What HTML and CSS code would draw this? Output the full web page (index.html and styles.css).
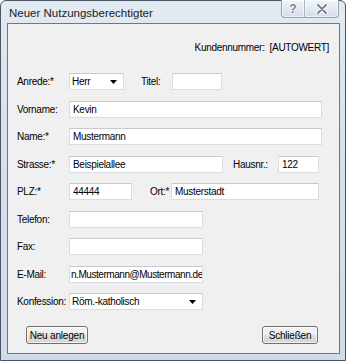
FILE: index.html
```html
<!DOCTYPE html>
<html lang="de">
<head>
    <meta charset="UTF-8">
    <meta name="viewport" content="width=device-width, initial-scale=1.0">
    <title>Neuer Nutzungsberechtigter</title>
    <link rel="stylesheet" href="styles.css">
</head>
<body>
    <div class="window">
        <div class="titlebar">
            <span class="title">Neuer Nutzungsberechtigter</span>
            <div class="caption-buttons">
                <div class="cap-btn cap-help">?</div>
                <div class="cap-btn cap-close">
                    <svg width="12" height="10" viewBox="0 0 12 10">
                        <path d="M2 1 L10 9 M10 1 L2 9" stroke="#fff" stroke-width="4" stroke-linecap="round"/>
                        <path d="M2 1 L10 9 M10 1 L2 9" stroke="#7a828d" stroke-width="2" stroke-linecap="round"/>
                    </svg>
                </div>
            </div>
        </div>

        <div class="client">
            <div class="kunde">Kundennummer:&nbsp;&nbsp;[AUTOWERT]</div>

            <div class="form">
                <div class="row">
                    <label class="lbl">Anrede:*</label>
                    <div class="combo w-anrede">
                        <span>Herr</span>
                        <svg class="arrow" width="7" height="4" viewBox="0 0 7 4"><path d="M0 0 H7 L3.5 4 Z" fill="#000"/></svg>
                    </div>
                    <label class="lbl-inline lbl-titel">Titel:</label>
                    <input class="field w-titel" type="text" value="">
                </div>

                <div class="row">
                    <label class="lbl">Vorname:</label>
                    <input class="field w-full" type="text" value="Kevin">
                </div>

                <div class="row">
                    <label class="lbl">Name:*</label>
                    <input class="field w-full" type="text" value="Mustermann">
                </div>

                <div class="row">
                    <label class="lbl">Strasse:*</label>
                    <input class="field w-strasse" type="text" value="Beispielallee">
                    <label class="lbl-inline lbl-hausnr">Hausnr.:</label>
                    <input class="field w-hausnr" type="text" value="122">
                </div>

                <div class="row">
                    <label class="lbl">PLZ:*</label>
                    <input class="field w-plz" type="text" value="44444">
                    <label class="lbl-inline lbl-ort">Ort:*</label>
                    <input class="field w-ort" type="text" value="Musterstadt">
                </div>

                <div class="row">
                    <label class="lbl">Telefon:</label>
                    <input class="field w-half" type="text" value="">
                </div>

                <div class="row">
                    <label class="lbl">Fax:</label>
                    <input class="field w-half" type="text" value="">
                </div>

                <div class="row">
                    <label class="lbl">E-Mail:</label>
                    <input class="field w-half field-tight" type="text" value="n.Mustermann@Mustermann.de">
                </div>

                <div class="row">
                    <label class="lbl">Konfession:</label>
                    <div class="combo w-half">
                        <span>Röm.-katholisch</span>
                        <svg class="arrow" width="7" height="4" viewBox="0 0 7 4"><path d="M0 0 H7 L3.5 4 Z" fill="#000"/></svg>
                    </div>
                </div>
            </div>

            <div class="actions">
                <button class="btn btn-new">Neu anlegen</button>
                <button class="btn btn-close">Schließen</button>
            </div>
        </div>
    </div>
</body>
</html>
```

FILE: styles.css
```css
body {
    margin: 0;
    background: #ffffff;
    font-family: "Liberation Sans", Arial, sans-serif;
}

/* Window frame */
.window {
    width: 346px;
    height: 361px;
    box-sizing: border-box;
    border: 1px solid #4a5663;
    border-radius: 6px 6px 0 0;
    padding: 0 5px 6px 6px;
    display: flex;
    flex-direction: column;
    background: linear-gradient(180deg, #e2eaf2 0%, #d6e1ec 40%, #cfdbe7 100%);
}

.titlebar {
    height: 22px;
    display: flex;
    align-items: flex-start;
    justify-content: space-between;
}

.title {
    font-size: 11.5px;
    color: #1a1a1a;
    margin-top: 6px;
    margin-left: 2px;
}

.caption-buttons {
    display: flex;
    margin-top: -1px;
    margin-right: 1px;
}

.cap-btn {
    height: 18px;
    box-sizing: border-box;
    border: 1px solid #94a0ad;
    border-top: none;
    display: flex;
    align-items: center;
    justify-content: center;
    background: linear-gradient(180deg, #f1f5f9 0%, #e2e9f0 50%, #d4dee8 100%);
    box-shadow: inset 0 0 0 1px rgba(255, 255, 255, 0.6);
}

.cap-help {
    width: 23px;
    border-radius: 0 0 0 4px;
    border-right: none;
    font-size: 12px;
    font-weight: bold;
    color: #7a828d;
    text-shadow: 0 0 2px #fff, 0 0 1px #fff;
}

.cap-close {
    width: 35px;
    border-radius: 0 0 4px 0;
    border-left: 1px solid #a9b3be;
}

/* Client area */
.client {
    flex: 1;
    border: 1px solid #6e7884;
    background: #f0f0f0;
    padding: 0 10px 0 9px;
    display: flex;
    flex-direction: column;
    font-size: 10px;
    letter-spacing: -0.3px;
    color: #000;
}

.kunde {
    height: 13px;
    line-height: 13px;
    margin-top: 17px;
    text-align: right;
}

.form {
    margin-top: 19px;
    display: flex;
    flex-direction: column;
    gap: 10.5px;
}

.row {
    height: 17px;
    display: flex;
    align-items: center;
}

.lbl {
    width: 52px;
    flex-shrink: 0;
    white-space: nowrap;
}

.lbl-inline {
    flex-shrink: 0;
    white-space: nowrap;
}

.lbl-titel {
    margin-left: 17px;
    width: 31px;
}

.lbl-hausnr {
    margin-left: 10px;
    width: 45px;
}

.lbl-ort {
    margin-left: 18px;
    width: 21px;
}

.field,
.combo {
    height: 17px;
    box-sizing: border-box;
    border: 1px solid #d9dce0;
    border-top-color: #c6cad0;
    background: #ffffff;
    font-family: inherit;
    font-size: 10px;
    letter-spacing: -0.3px;
    color: #000;
    padding: 0 3px;
    margin: 0;
    outline: none;
}

.field-tight {
    padding: 0 0 0 1px;
    letter-spacing: -0.45px;
}

.combo {
    display: flex;
    align-items: center;
    justify-content: space-between;
    padding: 0 6px 0 2px;
}

.combo .arrow {
    flex-shrink: 0;
}

.w-anrede { width: 55px; }
.w-titel { width: 50px; }
.w-full { width: 253px; }
.w-strasse { width: 154px; }
.w-hausnr { width: 41px; }
.w-plz { width: 63px; }
.w-ort { width: 148px; }
.w-half { width: 134px; }

/* Buttons */
.actions {
    margin-top: 16px;
    display: flex;
    justify-content: space-between;
    padding: 0 11px 0 9px;
}

.btn {
    height: 18px;
    box-sizing: border-box;
    border: 1px solid #707070;
    border-radius: 3px;
    background: linear-gradient(180deg, #f3f3f3 0%, #ececec 50%, #e0e0e0 51%, #d4d4d4 100%);
    box-shadow: inset 0 0 0 1px rgba(255, 255, 255, 0.7);
    font-family: inherit;
    font-size: 10px;
    letter-spacing: -0.2px;
    color: #000;
    padding: 0;
}

.btn-new { width: 62px; }
.btn-close { width: 56px; }
```
